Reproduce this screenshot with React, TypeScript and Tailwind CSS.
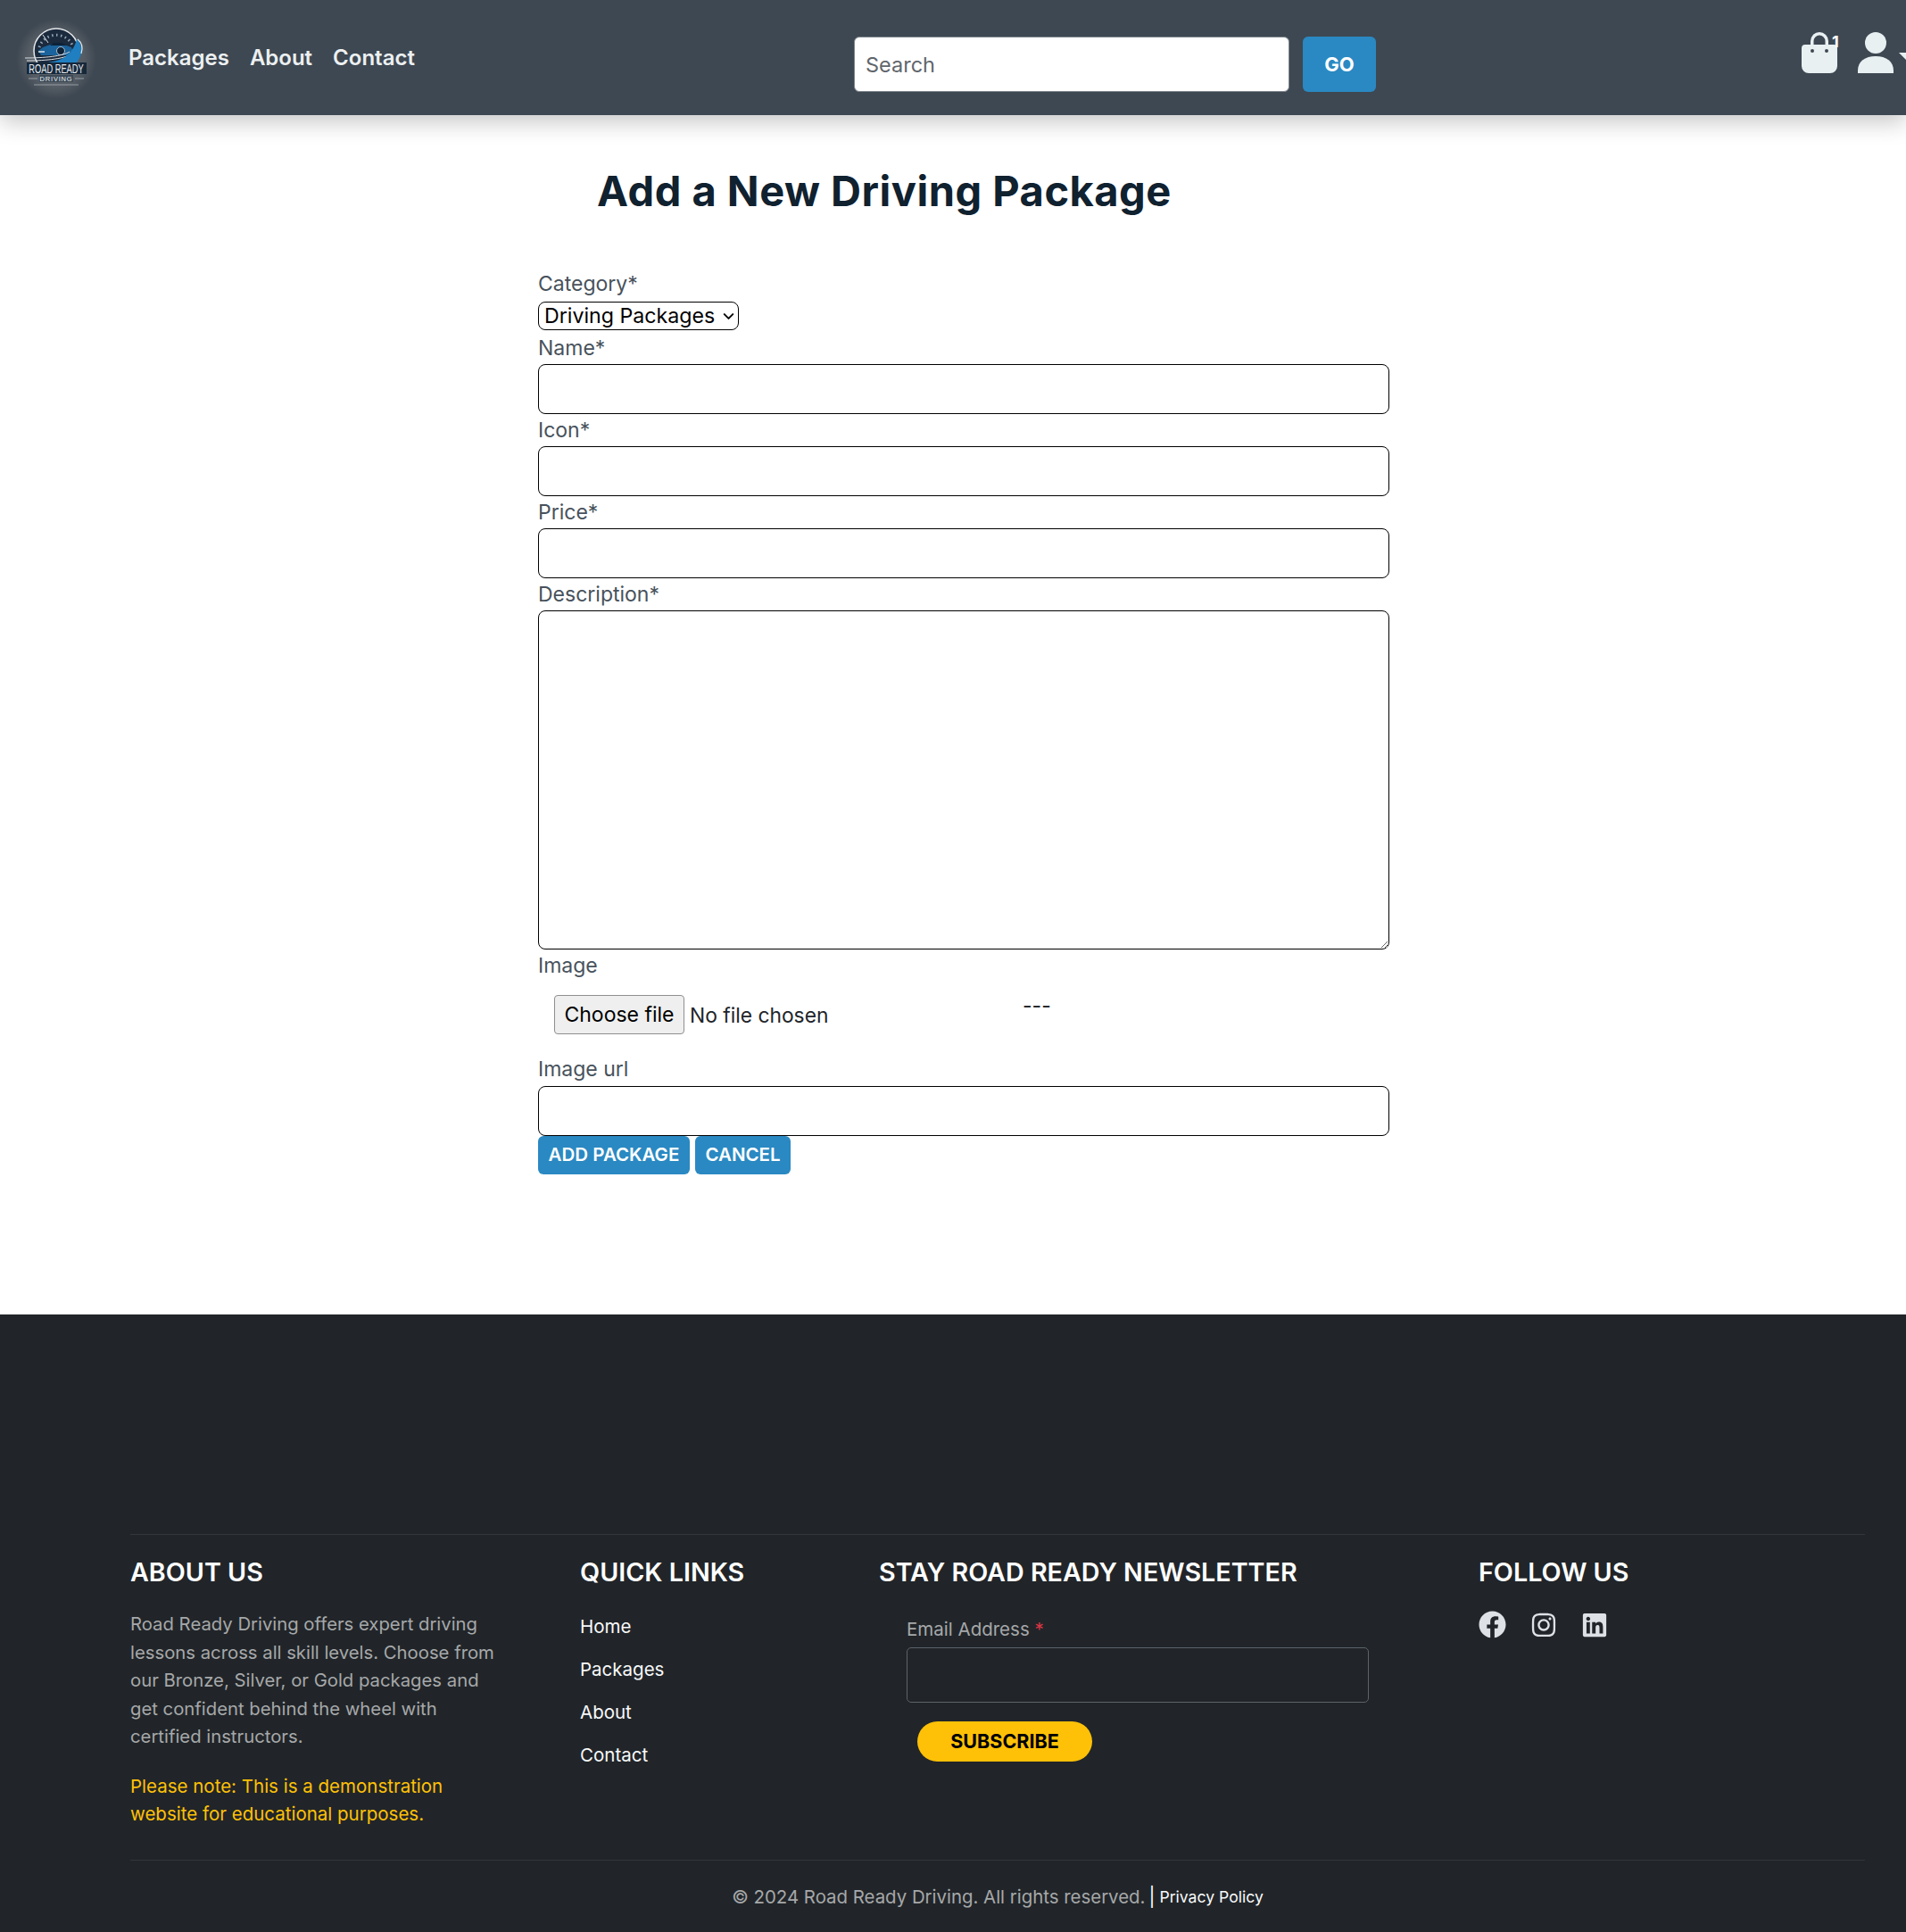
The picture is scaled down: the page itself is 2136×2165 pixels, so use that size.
import { ChevronDown } from 'lucide-react';
import { FaFacebook, FaInstagram, FaLinkedin } from 'react-icons/fa';

const navLinks = ['Packages', 'About', 'Contact'];
const quickLinks = ['Home', 'Packages', 'About', 'Contact'];
const textFields = ['Name*', 'Icon*', 'Price*'];

function Logo() {
  return (
    <svg viewBox="0 0 90 90" className="w-[90px] h-[90px] shrink-0">
      <defs>
        <radialGradient id="logoBg">
          <stop offset="0" stopColor="#666c73" />
          <stop offset="0.7" stopColor="#555c64" />
          <stop offset="1" stopColor="#3e4852" />
        </radialGradient>
      </defs>
      <circle cx="45" cy="45" r="45" fill="url(#logoBg)" />
      <circle cx="45" cy="36" r="25" fill="#1b2a3d" stroke="#e6e9ec" strokeWidth="1.5" />
      <path d="M26 32a20 20 0 0 1 38 0" fill="none" stroke="#93a6b8" strokeWidth="3" strokeDasharray="1.500 3.500" />
      <path d="M30 18l6 9" stroke="#dfe4e8" strokeWidth="1" />
      <path d="M25 36l5-4 11-4h10l11 4 2 5-1 4H28z" fill="#1a639c" />
      <path d="M38 30l4-3h9l6 3z" fill="#0e2238" />
      <circle cx="50" cy="36" r="4.500" fill="#0e2238" stroke="#cfd8e0" strokeWidth="0.8" />
      <path d="M25 37h7" stroke="#dfe4e8" strokeWidth="1.500" />
      <path d="M10 44c22 0 42-2 50-7M12 47c22 0 44-2 53-9" fill="none" stroke="#d9dee2" strokeWidth="1" />
      <path d="M36 49c14-2 27-7 32-26 4 3 6 10 5 16-1 4-3 7-5 10z" fill="#1f7fc0" />
      <path d="M69 23c5 4 6 10 4 16" fill="none" stroke="#e4e9ed" strokeWidth="1.200" />
      <rect x="12" y="49" width="67" height="13" fill="#17283b" />
      <text transform="translate(45 60.500) scale(0.62 1)" textAnchor="middle" fontSize="15" fill="#e8ecef" className="font-['Liberation_Sans',sans-serif]">ROAD READY</text>
      <rect x="26" y="63" width="38" height="8" fill="#3c4a58" />
      <path d="M14 67h10M66 67h10M20 74h50" stroke="#b5bcc3" strokeWidth="0.7" />
      <text x="45" y="70" textAnchor="middle" fontSize="7.500" fill="#e8ecef" letterSpacing="0.800" className="font-['Liberation_Sans',sans-serif]">DRIVING</text>
    </svg>
  );
}

function BagIcon() {
  return (
    <div className="relative w-[46px] h-[46px]">
      <svg viewBox="0 0 40 46" className="absolute left-0 top-0 w-[40px] h-[46px]" fill="#e9f0f2">
        <path d="M10 15v-5a10 10 0 0 1 20 0v5h-3.500v-5a6.500 6.500 0 0 0-13 0v5z" />
        <path d="M4 14h32a4 4 0 0 1 4 4v20a8 8 0 0 1-8 8H8a8 8 0 0 1-8-8V18a4 4 0 0 1 4-4zm8 5a2 2 0 1 0 0 4 2 2 0 0 0 0-4zm16 0a2 2 0 1 0 0 4 2 2 0 0 0 0-4z" fillRule="evenodd" />
      </svg>
      <span className="absolute left-[34px] top-[1px] text-[18px] leading-[20px] font-bold text-white">1</span>
    </div>
  );
}

function UserIcon() {
  return (
    <svg viewBox="0 0 40 46" className="w-[40px] h-[46px]" fill="#e9f0f2">
      <circle cx="20" cy="12" r="12" />
      <path d="M0 46v-3c0-10 8-16 20-16s20 6 20 16v3z" />
    </svg>
  );
}

export default function App() {
  return (
    <div className="min-h-screen bg-white overflow-hidden font-['Inter',sans-serif]">
      <header className="relative z-10 h-[129px] bg-[#3e4852] shadow-[0_8px_24px_rgba(0,0,0,0.22)] flex">
        <div className="pl-[18px] pt-[21px] shrink-0">
          <Logo />
        </div>
        <nav className="ml-[36px] pt-[49px] flex gap-[23px] w-[813px] shrink-0">
          {navLinks.map((link) => (
            <a key={link} className="text-[24px] leading-[32px] font-semibold text-[#ecf0f1]">
              {link}
            </a>
          ))}
        </nav>
        <div className="pt-[41px] flex gap-[15px] w-[1062px] shrink-0">
          <input
            placeholder="Search"
            className="w-[488px] h-[62px] bg-white border border-[#7d858c] rounded-[6px] px-[12px] text-[23.5px] text-[#212529] placeholder:text-[#5f666d] outline-none"
          />
          <button className="w-[82px] h-[62px] bg-[#2a89c2] rounded-[6px] text-white text-[22px] font-bold">GO</button>
        </div>
        <div className="pt-[36px] flex gap-[17px] shrink-0">
          <BagIcon />
          <UserIcon />
          <div className="mt-[23px] -ml-[11px] w-0 h-0 border-x-[8px] border-x-transparent border-t-[8px] border-t-[#e9f0f2]" />
        </div>
      </header>

      <main className="h-[1344px] pl-[603px]">
        <h1 className="pt-[56px] pl-[66px] h-[171px] text-[47px] leading-[58px] font-bold tracking-[0.5px] text-[#10212f]">
          Add a New Driving Package
        </h1>
        <form className="w-[954px]">
          <label className="block h-[38px] text-[23px] leading-[37px] text-[#48525c]">Category*</label>
          <div className="relative w-[225px] h-[34px]">
            <select className="block appearance-none w-full h-[32px] border border-black rounded-[8px] pl-[6px] text-[23.2px] leading-[30px] text-black">
              <option>Driving Packages</option>
            </select>
            <ChevronDown className="absolute right-[2px] top-[7px] w-[19px] h-[19px] text-black pointer-events-none" strokeWidth={2.5} />
          </div>
          {textFields.map((field) => (
            <div key={field}>
              <label className="block h-[36px] text-[23px] leading-[37px] text-[#48525c]">{field}</label>
              <input className="block w-full h-[56px] border border-black rounded-[8px]" />
            </div>
          ))}
          <label className="block h-[36px] text-[23px] leading-[37px] text-[#48525c]">Description*</label>
          <textarea className="block w-full h-[380px] border border-black rounded-[8px]" />
          <label className="block h-[36px] text-[23px] leading-[37px] text-[#48525c]">Image</label>
          <div className="h-[80px] pl-[18px] pt-[15px] flex">
            <div className="w-[525px] flex items-start">
              <button type="button" className="w-[146px] h-[44px] bg-[#efefef] border border-[#8f8f8f] rounded-[4px] text-[23px] text-black">
                Choose file
              </button>
              <span className="ml-[6px] mt-[1px] text-[22.8px] leading-[44px] text-[#212529]">No file chosen</span>
            </div>
            <span className="text-[23px] leading-[24px] text-[#212529]">---</span>
          </div>
          <label className="block h-[37px] text-[23px] leading-[37px] text-[#48525c]">Image url</label>
          <input className="block w-full h-[56px] border border-black rounded-[8px]" />
          <div className="flex gap-[6px]">
            <button className="w-[170px] h-[43px] bg-[#2a89c2] rounded-[6px] text-white text-[20.5px] font-semibold">ADD PACKAGE</button>
            <button className="w-[107px] h-[43px] bg-[#2a89c2] rounded-[6px] text-white text-[20.5px] font-semibold">CANCEL</button>
          </div>
        </form>
      </main>

      <footer className="h-[692px] bg-[#212529] pt-[246px] pl-[146px] pr-[46px]">
        <div className="border-t border-[#32373c] h-[365px] flex pt-[24px]">
          <div className="w-[504px]">
            <h3 className="text-[28.7px] leading-[36px] font-semibold text-white">ABOUT US</h3>
            <p className="mt-[24px] text-[20.3px] leading-[31.5px] text-[#a6a8a9] whitespace-nowrap">
              Road Ready Driving offers expert driving<br />
              lessons across all skill levels. Choose from<br />
              our Bronze, Silver, or Gold packages and<br />
              get confident behind the wheel with<br />
              certified instructors.
            </p>
            <p className="mt-[24px] text-[20.5px] leading-[31.5px] text-[#ffc107] whitespace-nowrap">
              Please note: This is a demonstration<br />
              website for educational purposes.
            </p>
          </div>
          <div className="w-[335px]">
            <h3 className="text-[28.7px] leading-[36px] font-semibold text-white">QUICK LINKS</h3>
            <ul className="mt-[27px] flex flex-col gap-[16px]">
              {quickLinks.map((link) => (
                <li key={link} className="text-[20.5px] leading-[32px] text-[#f8f9fa]">{link}</li>
              ))}
            </ul>
          </div>
          <div className="w-[672px]">
            <h3 className="text-[28.7px] leading-[36px] font-semibold text-white">STAY ROAD READY NEWSLETTER</h3>
            <div className="pl-[31px] mt-[30px]">
              <label className="block h-[32px] text-[20.5px] leading-[32px] text-[#a6a8a9]">
                Email Address <span className="text-[#dc3545]">*</span>
              </label>
              <input className="block w-[518px] h-[62px] border border-[#5c636a] rounded-[5px] bg-transparent mt-[4px]" />
              <button className="block ml-[12px] mt-[21px] w-[196px] h-[45px] bg-[#ffc107] rounded-full text-[21.5px] font-bold text-black">
                SUBSCRIBE
              </button>
            </div>
          </div>
          <div>
            <h3 className="text-[28.7px] leading-[36px] font-semibold text-white">FOLLOW US</h3>
            <div className="mt-[25px] flex items-center gap-[27px] text-[#dee2e6]">
              <FaFacebook className="w-[31px] h-[31px]" />
              <FaInstagram className="w-[30px] h-[30px]" />
              <FaLinkedin className="w-[30px] h-[30px]" />
            </div>
          </div>
        </div>
        <div className="border-t border-[#32373c] pt-[25px] flex justify-center items-center">
          <span className="text-[20.4px] leading-[32px] text-[#a6a8a9]">© 2024 Road Ready Driving. All rights reserved.</span>
          <span className="ml-[4px] text-[21px] leading-[32px] text-[#f8f9fa]">|</span>
          <span className="ml-[5px] text-[17.6px] leading-[32px] text-[#f8f9fa]">Privacy Policy</span>
        </div>
      </footer>
    </div>
  );
}
